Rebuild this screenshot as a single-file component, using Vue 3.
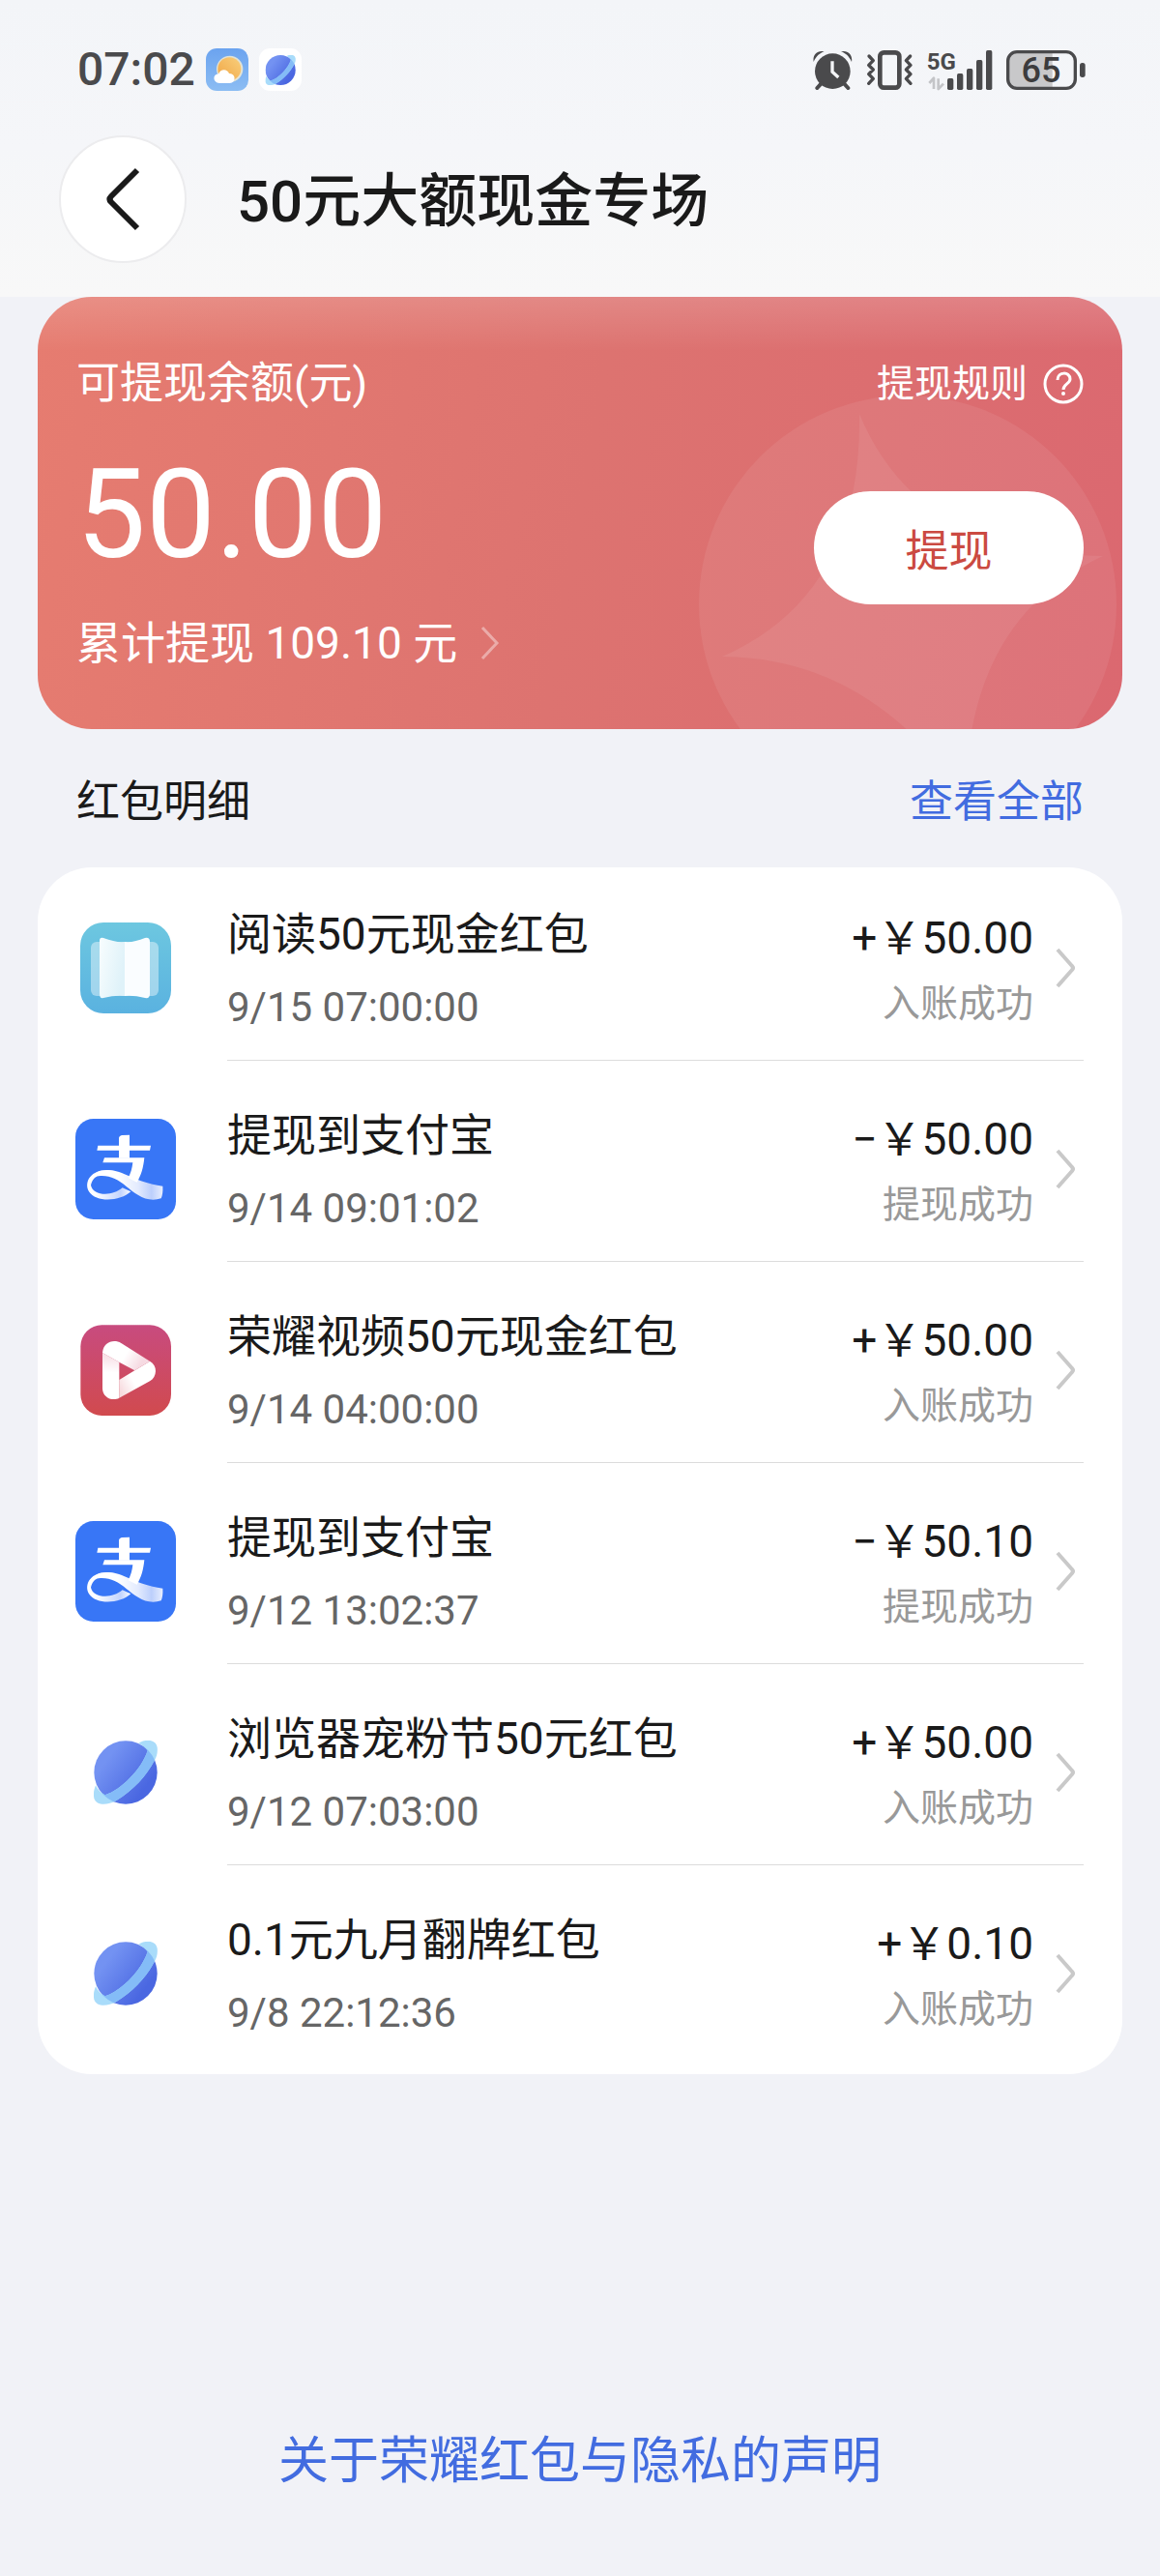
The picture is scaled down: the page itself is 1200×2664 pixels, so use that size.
<script setup>
import { ref } from 'vue'

const total = ref('109.10')
const balance = ref('50.00')

const records = ref([
  { id: 1, icon: 'book', title: '阅读50元现金红包', time: '9/15 07:00:00', amount: '+￥50.00', status: '入账成功' },
  { id: 2, icon: 'alipay', title: '提现到支付宝', time: '9/14 09:01:02', amount: '−￥50.00', status: '提现成功' },
  { id: 3, icon: 'video', title: '荣耀视频50元现金红包', time: '9/14 04:00:00', amount: '+￥50.00', status: '入账成功' },
  { id: 4, icon: 'alipay', title: '提现到支付宝', time: '9/12 13:02:37', amount: '−￥50.10', status: '提现成功' },
  { id: 5, icon: 'browser', title: '浏览器宠粉节50元红包', time: '9/12 07:03:00', amount: '+￥50.00', status: '入账成功' },
  { id: 6, icon: 'browser', title: '0.1元九月翻牌红包', time: '9/8 22:12:36', amount: '+￥0.10', status: '入账成功' }
])
</script>

<template>
  <div class="page">
    <!-- shared artwork -->
    <svg class="defs" aria-hidden="true">
      <defs>
        <linearGradient id="planet-fill" x1="0.2" y1="0.3" x2="0.8" y2="0.75">
          <stop offset="0" stop-color="#7392f2" />
          <stop offset="1" stop-color="#4a67e1" />
        </linearGradient>
        <clipPath id="planet-clip"><circle cx="100" cy="100" r="98" /></clipPath>
        <path
          id="planet-ring"
          d="M140 9C160-3 192-5 198 22C200 38 196 52 190 62C165 110 125 155 70 188C45 201 10 205 2 180C-1 165 2 152 7 140C13 152 22 163 36 170C85 155 150 90 168 32C160 22 151 15 140 9Z"
        />
        <symbol id="planet" viewBox="0 0 200 200">
          <circle cx="100" cy="100" r="98" fill="url(#planet-fill)" />
          <use href="#planet-ring" fill="#a9dcfa" />
          <use href="#planet-ring" fill="#84bcf7" clip-path="url(#planet-clip)" />
        </symbol>
        <linearGradient id="sky" x1="0" y1="0" x2="0" y2="1">
          <stop offset="0" stop-color="#6ba3ef" />
          <stop offset="1" stop-color="#8cbdf3" />
        </linearGradient>
        <linearGradient id="sun" x1="0" y1="1" x2="1" y2="0">
          <stop offset="0" stop-color="#f0a544" />
          <stop offset="1" stop-color="#f9cf7c" />
        </linearGradient>
        <linearGradient id="book-bg" x1="0" y1="0" x2="0" y2="1">
          <stop offset="0" stop-color="#6dc7e0" />
          <stop offset="1" stop-color="#5ab2e0" />
        </linearGradient>
        <linearGradient id="book-page" x1="0" y1="0" x2="1" y2="0.4">
          <stop offset="0" stop-color="#f8fdfe" />
          <stop offset="1" stop-color="#dff2f9" />
        </linearGradient>
        <linearGradient id="tail" gradientUnits="userSpaceOnUse" x1="130" y1="0" x2="272" y2="0">
          <stop offset="0" stop-color="#fff" />
          <stop offset="0.45" stop-color="#e3ebfe" />
          <stop offset="0.75" stop-color="#bccffc" />
          <stop offset="1" stop-color="#e9effe" />
        </linearGradient>
        <linearGradient id="loop" gradientUnits="userSpaceOnUse" x1="60" y1="0" x2="175" y2="0">
          <stop offset="0" stop-color="#fff" />
          <stop offset="0.7" stop-color="#c3d4fd" />
          <stop offset="1" stop-color="#fff" />
        </linearGradient>
        <linearGradient id="video-bg" x1="0" y1="0" x2="0" y2="1">
          <stop offset="0" stop-color="#c84b7f" />
          <stop offset="1" stop-color="#d14a4e" />
        </linearGradient>
        <linearGradient id="fold-a" gradientUnits="userSpaceOnUse" x1="85" y1="75" x2="180" y2="132">
          <stop offset="0.5" stop-color="#fff" />
          <stop offset="1" stop-color="#f6dae2" />
        </linearGradient>
        <linearGradient id="fold-b" gradientUnits="userSpaceOnUse" x1="210" y1="150" x2="120" y2="200">
          <stop offset="0.5" stop-color="#fff" />
          <stop offset="1" stop-color="#f7dade" />
        </linearGradient>
        <linearGradient id="fold-c" gradientUnits="userSpaceOnUse" x1="95" y1="200" x2="100" y2="95">
          <stop offset="0.5" stop-color="#fff" />
          <stop offset="1" stop-color="#f8e0e6" />
        </linearGradient>
      </defs>
      <symbol id="icon-browser" viewBox="0 0 312 312">
        <use href="#planet" x="56" y="56" width="200" height="200" />
      </symbol>
      <symbol id="icon-book" viewBox="0 0 104 104">
        <rect x="5" y="5" width="94" height="94" rx="24" fill="url(#book-bg)" />
        <rect x="16" y="25" width="70" height="56" rx="6" fill="#fff" opacity="0.42" />
        <path d="M25 24Q25 20 29 21Q42 26 51 25V81Q41 80 29 83Q25 84 25 79Z" fill="url(#book-page)" />
        <path d="M51 25Q60 26 72 21Q77 20 77 25V79Q77 84 72 83Q60 80 51 81Z" fill="#fafdff" />
      </symbol>
      <symbol id="icon-alipay" viewBox="0 0 312 312">
        <rect width="312" height="312" rx="56" fill="#3876f6" />
        <path
          d="M110 173C70 166 44 182 48 206C54 238 112 243 146 214L172 226C140 256 66 262 42 226C24 192 54 158 98 159C108 159 112 160 118 162Z"
          fill="url(#loop)"
        />
        <path
          d="M98 159C150 158 180 196 271 209C272 226 270 238 266 247C220 262 186 232 158 210C132 188 104 174 72 178C60 180 52 190 48 206C38 180 64 160 98 159Z"
          fill="url(#tail)"
        />
        <path d="M90 121H214C211 152 204 176 191 197L164 184C172 168 176 153 178 136H85Z" fill="#fff" />
        <path d="M70 83H135V60Q136 52 146 51L168 50V83H234L231 98H168V122H135V98H67Z" fill="#fff" />
      </symbol>
      <symbol id="icon-video" viewBox="-16 -16 312 312">
        <rect width="281" height="281" rx="66" fill="url(#video-bg)" />
        <path d="M68 86L120 115V226C98 238 68 224 68 196Z" fill="url(#fold-c)" />
        <path d="M120 226V170L168 141L215 112C240 126 238 160 215 174Z" fill="url(#fold-b)" />
        <path d="M68 86C70 54 102 42 126 56L215 112L168 141L120 115Z" fill="url(#fold-a)" />
      </symbol>
    </svg>

    <header class="header">
      <div class="status-bar">
        <div class="status-left">
          <span class="clock">07:02</span>
          <svg class="app-badge" viewBox="0 0 132 132">
            <rect width="132" height="132" rx="34" fill="url(#sky)" />
            <circle cx="74" cy="64" r="41" fill="#fdf0cf" opacity="0.8" />
            <circle cx="73" cy="64" r="36" fill="url(#sun)" />
            <path
              d="M42 108C20 107 20 80 40 79C44 64 66 62 72 78C92 76 96 106 74 108Z"
              fill="#fff"
            />
          </svg>
          <svg class="app-badge" viewBox="0 0 132 132">
            <rect width="132" height="132" rx="34" fill="#fff" />
            <use href="#planet" x="19" y="20" width="95" height="95" />
          </svg>
        </div>
        <div class="status-right">
          <svg class="alarm" viewBox="0 0 123 123">
            <circle cx="61" cy="65" r="55" fill="#4a4a4c" />
            <path d="M25 104L13 117M97 104L109 117" stroke="#4a4a4c" stroke-width="12" stroke-linecap="round" />
            <path d="M2 36C-2 14 14-2 35 4C22 8 10 18 2 36ZM120 36C124 14 108-2 87 4C100 8 112 18 120 36Z" fill="#4a4a4c" />
            <path d="M60 34V67L79 84" fill="none" stroke="#f4f5f7" stroke-width="10" />
          </svg>
          <svg class="vibrate" viewBox="0 0 150 123">
            <rect x="43" y="7" width="60" height="109" rx="12" fill="none" stroke="#4a4a4c" stroke-width="14" />
            <path
              d="M9 18L22 32L8 46L22 60L8 74L22 88L8 103M137 18L124 32L138 46L124 60L138 74L124 88L138 103"
              fill="none"
              stroke="#4a4a4c"
              stroke-width="10"
              stroke-linecap="round"
              stroke-linejoin="round"
            />
          </svg>
          <svg class="signal" viewBox="0 0 201 123">
            <text x="-4" y="61" class="signal-type">5G</text>
            <path d="M4 102L18 86V120M48 104L32 120V88" fill="none" stroke="#c4c5c8" stroke-width="8" stroke-linejoin="round" />
            <g fill="#4a4a4c">
              <rect x="60" y="87" width="19" height="36" rx="5" />
              <rect x="90" y="72" width="19" height="51" rx="5" />
              <rect x="120" y="57" width="19" height="66" rx="5" />
              <rect x="150" y="30" width="19" height="93" rx="5" />
              <rect x="180" y="0" width="19" height="123" rx="5" />
            </g>
          </svg>
          <svg class="battery" viewBox="0 0 246 123">
            <path d="M30 5H143V118H30Q5 118 5 93V30Q5 5 30 5Z" fill="#c8c8ca" />
            <rect x="5" y="5" width="209" height="113" rx="28" fill="none" stroke="#4a4a4c" stroke-width="10" />
            <rect x="228" y="39" width="17" height="45" rx="8" fill="#4a4a4c" />
            <text x="108" y="100" class="battery-level">65</text>
          </svg>
        </div>
      </div>
      <nav class="nav">
        <button class="back" type="button" aria-label="返回">
          <svg class="back-icon" viewBox="0 0 66 66">
            <path d="M48 3L21 30Q18 33 21 36L48 63" fill="none" stroke="#1a1a1a" stroke-width="6" />
          </svg>
        </button>
        <h1 class="title">50元大额现金专场</h1>
      </nav>
    </header>

    <main class="main">
      <section class="card">
        <svg class="watermark" viewBox="0 0 434 434" aria-hidden="true">
          <circle cx="217" cy="217" r="216" />
          <path d="M167 20Q228 167 419 167Q278 232 277 418Q178 272 25 271Q170 208 167 20Z" />
        </svg>
        <div class="card-left">
          <p class="label">可提现余额(元)</p>
          <p class="balance">{{ balance }}</p>
          <a class="total" href="#total">
            累计提现 {{ total }} 元
            <svg class="total-arrow" viewBox="0 0 20 36">
              <path d="M2 2L17 18L2 34" fill="none" stroke="#fff" stroke-width="3" />
            </svg>
          </a>
        </div>
        <div class="card-right">
          <a class="rules" href="#rules">
            提现规则
            <svg class="help" viewBox="0 0 42 42" fill="none" stroke="#fff">
              <circle cx="21" cy="21" r="19" stroke-width="3" />
              <path d="M15 17C15 8 28 8 28 16C28 21 21 21 21 27" stroke-width="3" />
              <circle cx="21" cy="31" r="1" stroke-width="2" />
            </svg>
          </a>
          <button class="withdraw" type="button">提现</button>
        </div>
      </section>

      <div class="section-head">
        <h2 class="section-title">红包明细</h2>
        <a class="more" href="#all">查看全部</a>
      </div>

      <ul class="list">
        <li v-for="item in records" :key="item.id">
          <a class="row" :href="`#record-${item.id}`">
            <svg class="row-icon"><use :href="`#icon-${item.icon}`" /></svg>
            <div class="row-body">
              <div class="row-info">
                <span class="row-title">{{ item.title }}</span>
                <time class="row-time">{{ item.time }}</time>
              </div>
              <div class="row-value">
                <span class="row-amount">{{ item.amount }}</span>
                <span class="row-status">{{ item.status }}</span>
              </div>
              <svg class="row-arrow" viewBox="0 0 30 44">
                <path d="M3 3L18 20Q20 22 18 24L3 41" fill="none" stroke="#c9c9c9" stroke-width="4" />
              </svg>
            </div>
          </a>
        </li>
      </ul>
    </main>

    <footer class="footer">
      <a href="#privacy">关于荣耀红包与隐私的声明</a>
    </footer>
  </div>
</template>

<style>
body {
  background: #f1f2f7;
}
</style>

<style scoped>
.page {
  display: flex;
  flex-direction: column;
  min-height: 100vh;
  font-family: Roboto, 'Noto Sans CJK SC', sans-serif;
  color: #1a1a1a;
  background: #f1f2f7;
}
h1,
h2,
p,
ul {
  margin: 0;
  padding: 0;
  font-weight: 400;
}
a {
  color: inherit;
  text-decoration: none;
}
button {
  border: 0;
  padding: 0;
  font-family: inherit;
  background: #fff;
}
svg {
  display: block;
  flex: none;
}
.defs {
  position: absolute;
  width: 0;
  height: 0;
}

.header {
  padding-bottom: 35px;
  background: linear-gradient(#f3f5f8, #f5f6f9 50%, #f8f8f8);
}
.status-bar {
  display: flex;
  align-items: center;
  justify-content: space-between;
  height: 44px;
  padding: 50px 77px 46px 80px;
}
.status-left,
.status-right {
  display: flex;
  align-items: center;
}
.status-left {
  gap: 11px;
}
.status-right {
  gap: 14px;
}
.clock {
  font-size: 48px;
  font-weight: 500;
  line-height: 44px;
  color: #4a4a4c;
}
.app-badge {
  width: 44px;
  height: 44px;
}
.alarm,
.vibrate,
.signal,
.battery {
  height: 41px;
}
.alarm {
  width: 41px;
}
.vibrate {
  width: 50px;
}
.signal {
  width: 67px;
  overflow: visible;
}
.battery {
  width: 82px;
  overflow: visible;
}
.signal-type {
  font-size: 72px;
  font-weight: 700;
  fill: #4a4a4c;
}
.battery-level {
  font-size: 108px;
  font-weight: 500;
  text-anchor: middle;
  fill: #3c3c3e;
}

.nav {
  display: flex;
  align-items: center;
  gap: 52px;
  padding: 0 61px;
}
.back {
  display: flex;
  align-items: center;
  justify-content: center;
  width: 132px;
  height: 132px;
  border: 2px solid #ececee;
  border-radius: 50%;
}
.back-icon {
  width: 66px;
  height: 66px;
}
.title {
  padding-top: 6px;
  font-size: 60px;
  font-weight: 500;
  line-height: 80px;
}

.main {
  padding: 0 39px;
}
.card {
  position: relative;
  display: flex;
  justify-content: space-between;
  padding: 60px 40px 59px;
  border-radius: 56px;
  overflow: hidden;
  color: #fff;
  background:
    linear-gradient(rgba(255, 255, 255, 0.15), rgba(255, 255, 255, 0) 56px),
    linear-gradient(100deg, #e67c70, #dd7370 50%, #db6870);
}
.watermark {
  position: absolute;
  top: 101px;
  right: 5px;
  width: 434px;
  height: 434px;
  fill: #fff;
  fill-opacity: 0.07;
}
.card-left,
.card-right {
  position: relative;
  display: flex;
  flex-direction: column;
}
.card-right {
  align-items: flex-end;
}
.label {
  font-size: 45px;
  line-height: 60px;
}
.balance {
  margin: 30px 0 28px;
  font-size: 128px;
  line-height: 150px;
}
.total {
  display: flex;
  align-items: center;
  gap: 24px;
  font-size: 46px;
  line-height: 60px;
}
.total-arrow {
  width: 20px;
  height: 36px;
  opacity: 0.4;
}
.rules {
  display: flex;
  align-items: center;
  gap: 16px;
  font-size: 39px;
  line-height: 60px;
}
.help {
  width: 42px;
  height: 42px;
}
.withdraw {
  width: 279px;
  height: 117px;
  margin-top: 81px;
  border-radius: 59px;
  font-size: 45px;
  color: #cb4a41;
}

.section-head {
  display: flex;
  justify-content: space-between;
  padding: 46px 40px 37px;
  font-size: 45px;
  line-height: 60px;
}
.section-title {
  font-size: 45px;
}
.more {
  color: #426ce0;
}

.list {
  list-style: none;
  border-radius: 56px;
  background: #fff;
}
.row {
  display: flex;
  align-items: center;
  gap: 53px;
  padding: 0 40px 0 39px;
}
.row-icon {
  width: 104px;
  height: 104px;
}
.row-body {
  display: flex;
  flex: 1;
  align-items: center;
  height: 191px;
  margin-bottom: 8px;
  padding-top: 8px;
  border-bottom: 1px solid #dcdcdc;
}
li:last-child .row-body {
  border-bottom-color: transparent;
}
.row-info,
.row-value {
  display: flex;
  flex-direction: column;
  padding-top: 7px;
}
.row-info {
  flex: 1;
  gap: 16px;
}
.row-value {
  gap: 8px;
  align-items: flex-end;
}
.row-title,
.row-amount {
  font-size: 46px;
  line-height: 60px;
}
.row-time {
  font-size: 42px;
  line-height: 60px;
  color: #666;
}
.row-status {
  font-size: 39px;
  line-height: 60px;
  color: #999;
}
.row-arrow {
  width: 30px;
  height: 44px;
  margin-left: 22px;
}

.footer {
  margin-top: auto;
  padding: 60px 39px 83px;
  text-align: center;
  font-size: 52px;
  line-height: 70px;
  color: #426ce0;
}
</style>
